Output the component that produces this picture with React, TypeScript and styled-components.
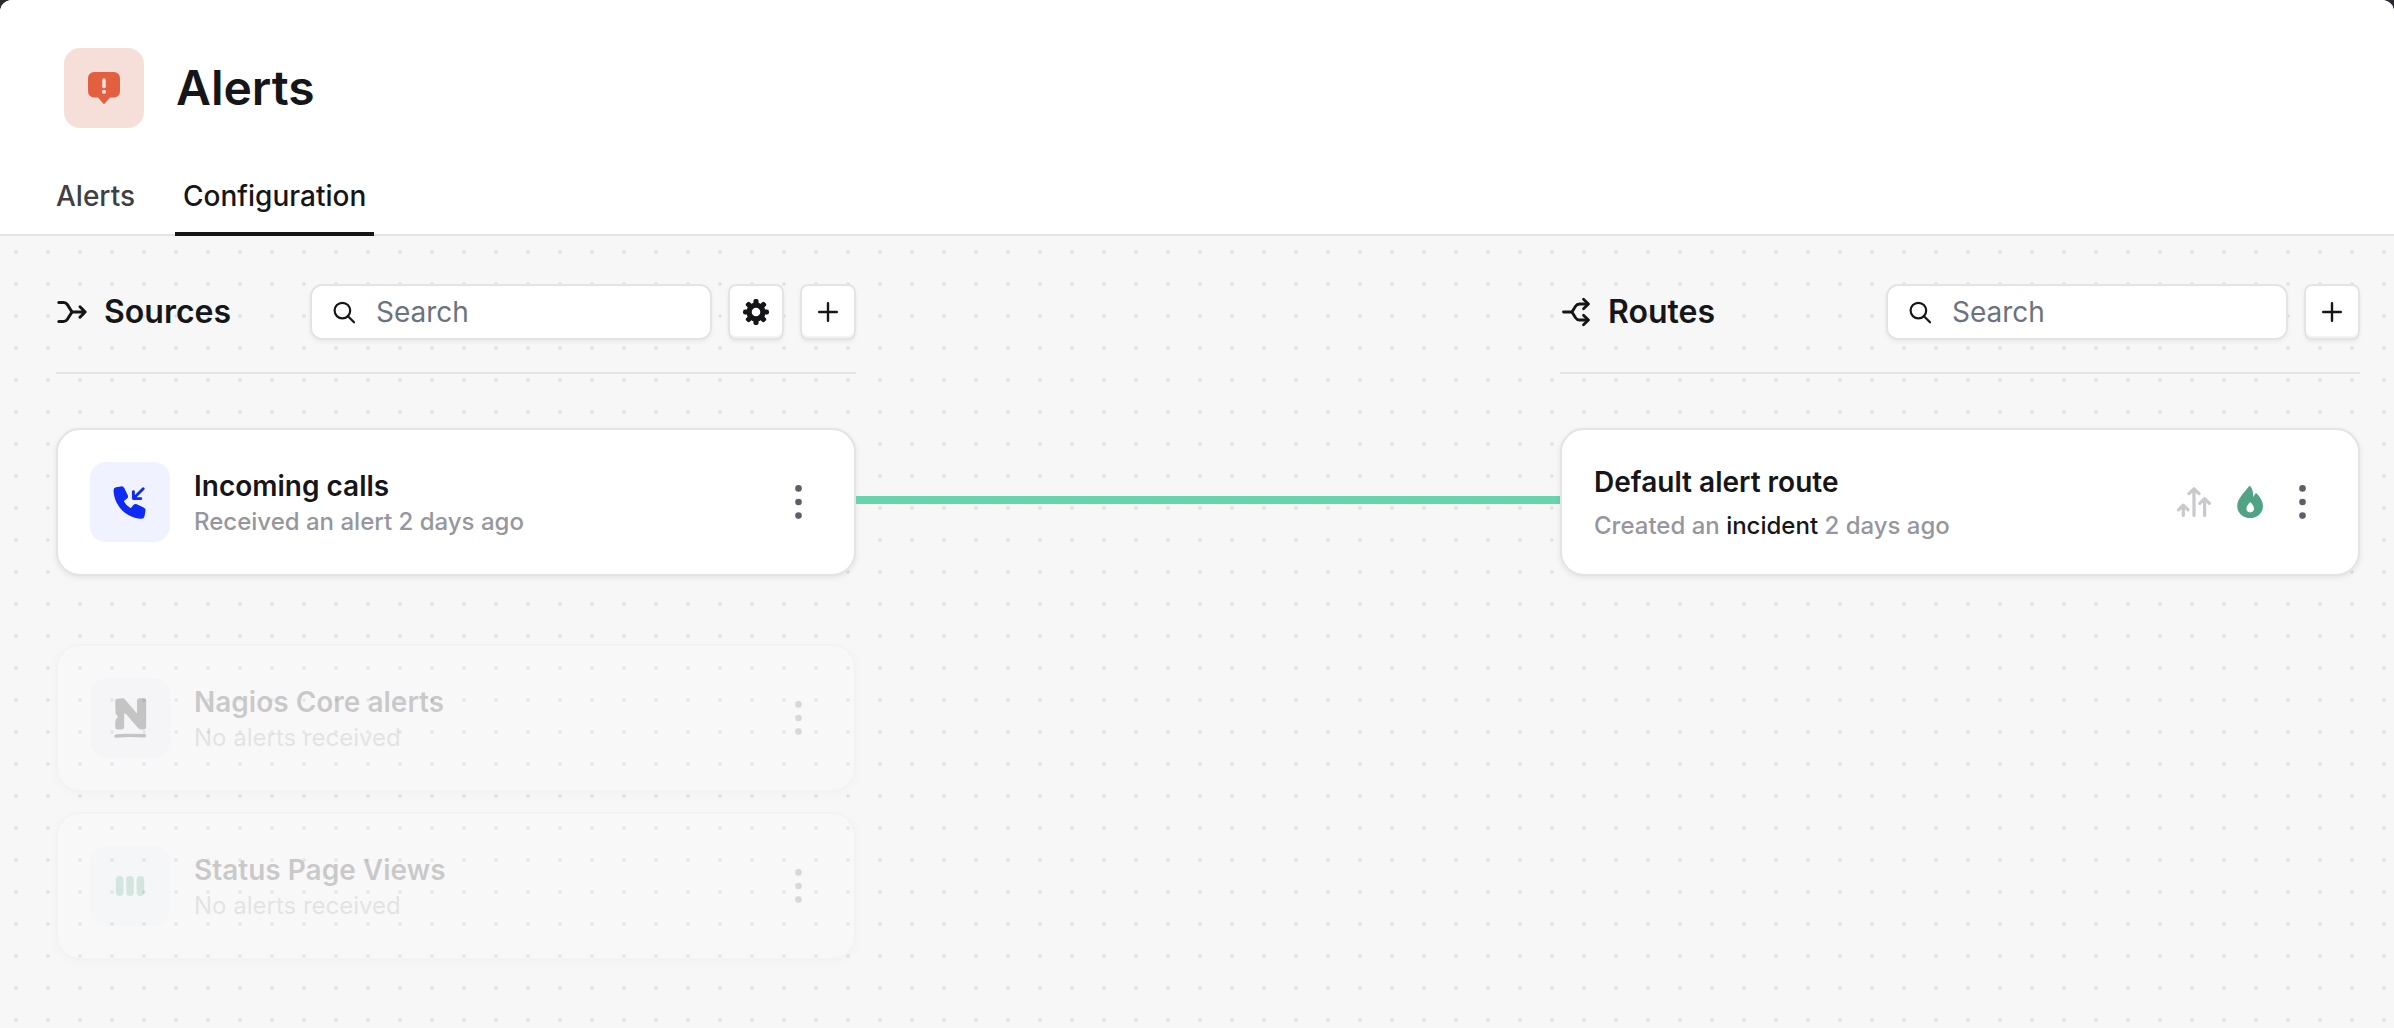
import React from "react";
import styled, { createGlobalStyle } from "styled-components";

const color = {
  ink: "#161618",
  muted: "#96969e",
  line: "#e4e4e5",
  canvas: "#f7f7f7",
  dot: "#e4e4e9",
  frame: "#2a2a30",
  green: "#50a385",
  connector: "#68d4ae",
};

const GlobalStyle = createGlobalStyle`
  *, *::before, *::after { box-sizing: border-box; }
  body {
    margin: 0;
    background: ${color.frame};
    color: ${color.ink};
    font-family: Inter, "Liberation Sans", sans-serif;
    -webkit-font-smoothing: antialiased;
  }
  button, input { font: inherit; color: inherit; }
`;

const Page = styled.div`
  display: flex;
  flex-direction: column;
  min-height: 100vh;
  overflow: hidden;
  border-radius: 12px 12px 0 0;
  background: ${color.canvas};
`;

const Header = styled.header`
  display: flex;
  flex-direction: column;
  gap: 48px;
  padding: 48px 48px 0;
  border-bottom: 2px solid ${color.line};
  background: #fff;
`;

const TitleRow = styled.div`
  display: flex;
  align-items: center;
  gap: 32px;
  padding-left: 16px;
`;

const Badge = styled.div<{ $tint: string }>`
  display: flex;
  flex: none;
  width: 80px;
  height: 80px;
  border-radius: 16px;
  background: ${(p) => p.$tint};
`;

const Title = styled.h1`
  margin: 0;
  font-size: 48px;
  line-height: 56px;
  font-weight: 600;
`;

const Tabs = styled.nav`
  display: flex;
  gap: 32px;
  margin-bottom: -2px;
`;

const Tab = styled.a<{ $active?: boolean }>`
  padding: 0 8px 16px;
  border-bottom: 4px solid ${(p) => (p.$active ? color.ink : "transparent")};
  color: ${(p) => (p.$active ? color.ink : "#3f3f46")};
  font-size: 28px;
  line-height: 40px;
  font-weight: 500;
  text-decoration: none;
`;

const Canvas = styled.main`
  display: grid;
  flex: 1;
  grid-template-columns: minmax(0, 25fr) minmax(0, 22fr) minmax(0, 25fr);
  align-items: start;
  padding: 48px 34px 48px 56px;
  background-image: radial-gradient(circle, ${color.dot} 2px, transparent 2px);
  background-size: 32px 32px;
`;

const Column = styled.section`
  display: flex;
  flex-direction: column;
  gap: 54px;
`;

const ColumnHeader = styled.div`
  display: flex;
  align-items: center;
  gap: 16px;
  padding-bottom: 32px;
  border-bottom: 2px solid ${color.line};
`;

const ColumnTitle = styled.h2`
  flex: 1;
  margin: 0;
  font-size: 32px;
  line-height: 40px;
  font-weight: 600;
`;

const SearchBox = styled.label`
  display: flex;
  align-items: center;
  gap: 20px;
  width: 402px;
  height: 56px;
  padding: 0 20px;
  border: 2px solid ${color.line};
  border-radius: 12px;
  background: #fff;
  box-shadow: 0 2px 4px rgba(0, 0, 0, 0.05);
`;

const SearchInput = styled.input`
  flex: 1;
  min-width: 0;
  padding: 0;
  border: 0;
  outline: 0;
  background: transparent;
  font-size: 28px;
  line-height: 40px;
  &::placeholder {
    color: #6b7280;
    opacity: 1;
  }
`;

const SquareButton = styled.button`
  display: flex;
  flex: none;
  align-items: center;
  justify-content: center;
  width: 56px;
  height: 56px;
  padding: 0;
  border: 2px solid ${color.line};
  border-radius: 8px;
  background: #fff;
  box-shadow: 0 2px 4px rgba(0, 0, 0, 0.06), inset 0 -2px 0 #f3f3f4;
  cursor: pointer;
`;

const CardGroups = styled.div`
  display: flex;
  flex-direction: column;
  gap: 68px;
`;

const CardList = styled.div`
  display: flex;
  flex-direction: column;
  gap: 20px;
`;

const Card = styled.article<{ $faded?: boolean }>`
  display: flex;
  align-items: center;
  gap: 24px;
  padding: 32px;
  border: 2px solid ${color.line};
  border-radius: 24px;
  background: #fff;
  box-shadow: 0 2px 6px rgba(0, 0, 0, 0.08);
  opacity: ${(p) => (p.$faded ? 0.2 : 1)};
`;

const CardText = styled.div<{ $gap?: number }>`
  display: flex;
  flex: 1;
  flex-direction: column;
  gap: ${(p) => p.$gap ?? 0}px;
  min-width: 0;
`;

const CardTitle = styled.h3`
  margin: 0;
  font-size: 28px;
  line-height: 40px;
  font-weight: 600;
`;

const CardMeta = styled.p<{ $quiet?: boolean }>`
  margin: 0;
  color: ${color.muted};
  font-size: 24px;
  line-height: 32px;
  font-weight: ${(p) => (p.$quiet ? 400 : 500)};
`;

const MetaLink = styled.a`
  color: ${color.ink};
  text-decoration: none;
`;

const CardActions = styled.div`
  display: flex;
  align-items: center;
  gap: 8px;
`;

const StatusIcons = styled.div`
  display: flex;
  gap: 16px;
`;

const MenuButton = styled.button`
  display: flex;
  align-items: center;
  justify-content: center;
  width: 48px;
  height: 48px;
  padding: 0;
  border: 0;
  background: none;
  cursor: pointer;
`;

const ConnectorLane = styled.div`
  padding-top: 212px;
`;

const Connector = styled.div`
  height: 8px;
  background: ${color.connector};
`;

const AlertIcon = () => (
  <svg width="80" height="80" viewBox="0 0 80 80" aria-hidden="true">
    <path
      d="M30 24H50a6 6 0 0 1 6 6V43.5a6 6 0 0 1-6 6H46L41 55.3a1.3 1.3 0 0 1-2 0L34 49.5H30a6 6 0 0 1-6-6V30a6 6 0 0 1 6-6Z"
      fill="#e2603f"
    />
    <path d="M40 32V38.5" stroke="#f7dfd9" strokeWidth="3.6" strokeLinecap="round" />
    <circle cx="40" cy="43.8" r="2.1" fill="#f7dfd9" />
  </svg>
);

const MergeIcon = () => (
  <svg width="32" height="32" viewBox="0 0 32 32" fill="none" stroke={color.ink} strokeWidth="3" strokeLinecap="round" strokeLinejoin="round" aria-hidden="true">
    <path d="M2.8 6.5H7.5Q10 6.5 11.4 8.6L16 16L11.4 23.3Q10 25.5 7.5 25.5H2.8" />
    <path d="M16 16H29M24 10.8L29.2 16L24 21.2" />
  </svg>
);

const SplitIcon = () => (
  <svg width="32" height="32" viewBox="0 0 32 32" fill="none" stroke={color.ink} strokeWidth="2.8" strokeLinecap="round" strokeLinejoin="round" aria-hidden="true">
    <path d="M3.5 16H12" />
    <path d="M28 8H19.5Q17 8 15.5 10.2L12 16L15.5 21.8Q17 24 19.5 24H28" />
    <path d="M23.5 3.2L28.4 8L23.5 12.8M23.5 19.2L28.4 24L23.5 28.8" />
  </svg>
);

const SearchIcon = () => (
  <svg width="24" height="24" viewBox="0 0 24 24" fill="none" stroke={color.ink} strokeWidth="2.2" strokeLinecap="round" aria-hidden="true">
    <circle cx="10.4" cy="10.6" r="7.8" />
    <path d="M16 16.3L22 22.3" />
  </svg>
);

const GearIcon = () => (
  <svg width="28" height="28" viewBox="-14 -14 28 28" fill={color.ink} aria-hidden="true">
    {[0, 45, 90, 135].map((a) => (
      <rect key={a} x="-2.6" y="-13" width="5.2" height="26" rx="2" transform={`rotate(${a})`} />
    ))}
    <circle r="9.6" />
    <circle r="4.3" fill="#fff" />
  </svg>
);

const PlusIcon = () => (
  <svg width="24" height="24" viewBox="0 0 24 24" stroke={color.ink} strokeWidth="2.4" strokeLinecap="round" aria-hidden="true">
    <path d="M12 3.2V20.8M3.2 12H20.8" />
  </svg>
);

const CallIcon = () => (
  <svg width="80" height="80" viewBox="0 0 80 80" aria-hidden="true">
    <path
      d="M26 25.2L31 24.4Q33.4 24.1 34.4 26.2L37.8 33.2Q38.6 35.2 37 36.6L33.8 39.2Q36.2 43.8 40.8 46.2L43.4 43Q44.8 41.4 46.8 42.2L53.6 45.4Q55.8 46.4 55.5 48.8L54.5 54.2Q54 56.8 51.2 56.7C36.2 56 24.2 44 23.5 28.6Q23.4 25.7 26 25.2Z"
      fill="#0d2bf5"
    />
    <path d="M53.2 26.8L43.6 36.3M43.4 29.6V36.6H50.8" fill="none" stroke="#0d2bf5" strokeWidth="2.9" strokeLinecap="round" strokeLinejoin="round" />
  </svg>
);

const NagiosIcon = () => (
  <svg width="80" height="80" viewBox="0 0 80 80" aria-hidden="true">
    <path d="M27 20.8L32.8 20.2Q34 20.2 35 21.5L47 35.6V23Q47 20.2 50 20.2H53.5Q56.2 20.2 56.2 23V49Q56.2 51.4 53.8 51.4H51Q49 51.4 47.8 49.8L36.2 36.2Q34.4 34.6 34.2 37V49Q34 51.2 31.6 51.4L28 51.6Q25.2 51.4 25.2 48.4V43.6Q25.4 41.2 28 38.8Q26.6 36.6 25.6 35.8L25.2 23.4Q25.2 21.2 27 20.8Z" />
    <path d="M26.4 56.2L36 55.8L54.6 56Q56.2 56.2 56.2 57.6Q56.2 59.2 54.6 59.4L40 59L26 59.8Q24 59.6 24.2 58.2Q24.4 56.6 26.4 56.2Z" />
  </svg>
);

const StatusPageIcon = () => (
  <svg width="80" height="80" viewBox="0 0 80 80" fill="#41a582" aria-hidden="true">
    <rect x="25.8" y="30" width="7.6" height="20" rx="3.8" />
    <rect x="36.2" y="30" width="7.6" height="20" rx="3.8" />
    <rect x="46.6" y="30" width="7.6" height="20" rx="3.8" />
  </svg>
);

const EscalationIcon = () => (
  <svg width="40" height="40" viewBox="0 0 40 40" fill="none" stroke="#c9c9cd" strokeWidth="3.2" strokeLinecap="round" strokeLinejoin="round" aria-hidden="true">
    <path d="M20 33.5V7M15 11.6L20 6.8L25 11.6" />
    <path d="M30.6 33.5V17M25.8 21.4L30.6 16.6L35.4 21.4" />
    <path d="M9.3 33.5V23.5M4.6 27.8L9.3 23.2L14 27.8" />
  </svg>
);

const FlameIcon = () => (
  <svg width="40" height="40" viewBox="0 0 40 40" fill={color.green} aria-hidden="true">
    <path
      fillRule="evenodd"
      d="M18.8 4.4Q19.8 3.4 20.6 4.6C22.4 7.2 23.3 10.4 23.4 15.2L25 11.9Q26 10.6 27 11.8C30.8 16 33 20 33 24C33 31 27.4 36.1 20.2 36.1S7.2 31 7.2 24C7.2 17 12.6 12.4 18.8 4.4ZM19.3 20.9C18.2 22.4 16.4 24.4 16.4 26.6A3.8 3.8 0 0 0 24 26.6C24 24.4 22.4 22.4 21.2 20.9Q20.2 19.8 19.3 20.9Z"
    />
  </svg>
);

const KebabIcon = () => (
  <svg width="40" height="40" viewBox="0 0 40 40" fill="#5f5f69" aria-hidden="true">
    <circle cx="20.5" cy="6.4" r="3.3" />
    <circle cx="20.5" cy="20" r="3.3" />
    <circle cx="20.5" cy="33.6" r="3.3" />
  </svg>
);

const Search = ({ label }: { label: string }) => (
  <SearchBox>
    <SearchIcon />
    <SearchInput type="text" placeholder="Search" aria-label={label} />
  </SearchBox>
);

type Source = {
  name: string;
  meta: string;
  tint: string;
  icon: React.ReactNode;
  faded?: boolean;
};

const SourceCard = ({ name, meta, tint, icon, faded }: Source) => (
  <Card $faded={faded}>
    <Badge $tint={tint}>{icon}</Badge>
    <CardText>
      <CardTitle>{name}</CardTitle>
      <CardMeta $quiet={faded}>{meta}</CardMeta>
    </CardText>
    <MenuButton aria-label={`${name} options`}>
      <KebabIcon />
    </MenuButton>
  </Card>
);

export default function App() {
  return (
    <>
      <GlobalStyle />
      <Page>
        <Header>
          <TitleRow>
            <Badge $tint="#f7dfd9">
              <AlertIcon />
            </Badge>
            <Title>Alerts</Title>
          </TitleRow>
          <Tabs>
            <Tab href="#alerts">Alerts</Tab>
            <Tab href="#configuration" $active aria-current="page">
              Configuration
            </Tab>
          </Tabs>
        </Header>
        <Canvas>
          <Column>
            <ColumnHeader>
              <MergeIcon />
              <ColumnTitle>Sources</ColumnTitle>
              <Search label="Search sources" />
              <SquareButton aria-label="Source settings">
                <GearIcon />
              </SquareButton>
              <SquareButton aria-label="Add source">
                <PlusIcon />
              </SquareButton>
            </ColumnHeader>
            <CardGroups>
              <SourceCard name="Incoming calls" meta="Received an alert 2 days ago" tint="#f0f2ff" icon={<CallIcon />} />
              <CardList>
                <SourceCard name="Nagios Core alerts" meta="No alerts received" tint="#f0f2ff" icon={<NagiosIcon />} faded />
                <SourceCard name="Status Page Views" meta="No alerts received" tint="#edf4fb" icon={<StatusPageIcon />} faded />
              </CardList>
            </CardGroups>
          </Column>
          <ConnectorLane>
            <Connector />
          </ConnectorLane>
          <Column>
            <ColumnHeader>
              <SplitIcon />
              <ColumnTitle>Routes</ColumnTitle>
              <Search label="Search routes" />
              <SquareButton aria-label="Add route">
                <PlusIcon />
              </SquareButton>
            </ColumnHeader>
            <Card>
              <CardText $gap={8}>
                <CardTitle>Default alert route</CardTitle>
                <CardMeta>
                  Created an <MetaLink href="#incident">incident</MetaLink> 2 days ago
                </CardMeta>
              </CardText>
              <CardActions>
                <StatusIcons>
                  <EscalationIcon />
                  <FlameIcon />
                </StatusIcons>
                <MenuButton aria-label="Default alert route options">
                  <KebabIcon />
                </MenuButton>
              </CardActions>
            </Card>
          </Column>
        </Canvas>
      </Page>
    </>
  );
}
